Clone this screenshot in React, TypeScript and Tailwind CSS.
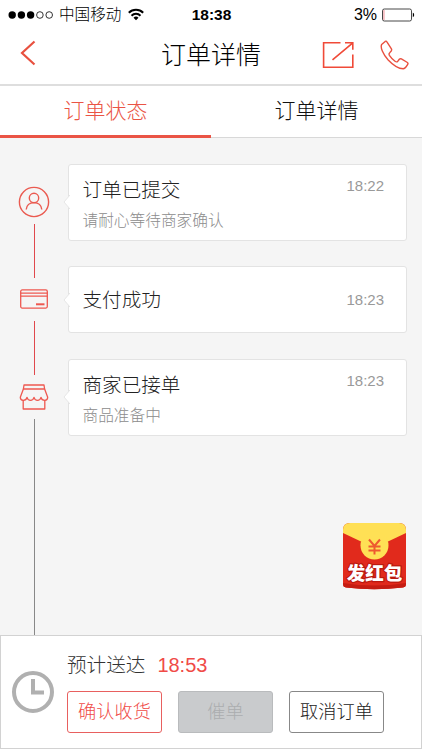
import React from 'react';

interface OrderStep {
    title: string;
    note?: string;
    time: string;
}

const steps: OrderStep[] = [
    { title: '订单已提交', note: '请耐心等待商家确认', time: '18:22' },
    { title: '支付成功', time: '18:23' },
    { title: '商家已接单', note: '商品准备中', time: '18:23' },
];

const StatusBar: React.FC = () => (
    <div className="grid h-7 grid-cols-[1fr_auto_1fr] items-center pr-[7px] pl-2 text-black">
        <div className="flex items-center">
            <svg width="46" height="10" viewBox="0 0 46 10">
                <circle cx="4.2" cy="5" r="3.7" />
                <circle cx="13.4" cy="5" r="3.7" />
                <circle cx="22.6" cy="5" r="3.7" />
                <circle cx="31.9" cy="5" r="3.3" fill="none" stroke="#000" strokeWidth="0.8" />
                <circle cx="41.2" cy="5" r="3.3" fill="none" stroke="#000" strokeWidth="0.8" />
            </svg>
            <span className="ml-[5px] pt-px text-[15.6px] leading-7 font-light">中国移动</span>
            <svg className="ml-[7px]" width="16" height="13" viewBox="0 0 16 13" fill="none" stroke="#000" strokeWidth="2">
                <path d="M0.8 4.8a10.2 10.2 0 0 1 14.4 0" />
                <path d="M3.5 7.7a6.4 6.4 0 0 1 9 0" />
                <path d="M8 12.2 5.5 9.7a3.5 3.5 0 0 1 5 0z" fill="#000" stroke="none" />
            </svg>
        </div>
        <span className="text-[15.5px] font-bold">18:38</span>
        <div className="flex items-center justify-end">
            <span className="text-[16px]">3%</span>
            <svg className="ml-[5px]" width="33" height="14" viewBox="0 0 33 14">
                <rect x="0.5" y="1" width="29" height="12" rx="1.8" fill="#fff" stroke="#333" strokeWidth="0.9" />
                <rect x="1.3" y="2" width="1.3" height="10" fill="#f3a6ac" />
                <path d="M30.8 4.8c1.8.4 1.8 4 0 4.4z" fill="#000" />
            </svg>
        </div>
    </div>
);

const Header: React.FC = () => (
    <div className="grid h-[58px] grid-cols-[1fr_auto_1fr] items-center border-b-2 border-[#dedede] pr-[13px] pl-[13px]">
        <svg className="mb-[7px] ml-[7px]" width="16" height="26" viewBox="0 0 16 26" fill="none" stroke="#e8503f" strokeWidth="2.2">
            <path d="M14.5 1.5 2 13l12.5 11.5" />
        </svg>
        <h1 className="-mt-[3px] text-[25px] leading-[50px] font-light text-black">订单详情</h1>
        <div className="flex items-center justify-end gap-[26px] pb-[2px]">
            <svg width="32" height="28" viewBox="0 0 32 28" fill="none" stroke="#f04a38" strokeWidth="1.6">
                <path d="M18.5 1.8H1.6v24.4h29.2V13.5" />
                <path d="M23 1.8h7.8v7M30.8 1.8 10.5 18.8" />
            </svg>
            <svg width="29" height="30" viewBox="0 0 29 30" fill="none" stroke="#e9503f" strokeWidth="1.4" strokeLinejoin="round">
                <path d="M5.2 1.4 1.6 4.6C.3 7.500 2.600 13.800 8.200 20c5.400 5.700 11 8.700 15 8.800 2.200 0 3.100-2.100 4.600-4.600.4-.8.200-1.300-.4-1.700l-6-3.600c-.8-.4-1.500-.3-2.100.4l-1.800 2.300c-.8.500-1.700.200-2.500-.4-2.300-1.700-4-3.500-5.600-5.900-.5-.9-.5-1.700.2-2.400l1.600-1.900c.5-.7.600-1.400.2-2.100L6.900 1.900c-.4-.8-1-1-1.700-.5z" />
            </svg>
        </div>
    </div>
);

const UserIcon: React.FC = () => (
    <svg className="shrink-0" width="32" height="32" viewBox="0 0 32 32" fill="none" stroke="#ea5a50" strokeWidth="1.4">
        <circle cx="16" cy="16" r="14.6" />
        <circle cx="16" cy="12" r="4.7" />
        <path d="M8.2 23.5c.5-4.3 3-6.9 7.8-6.9s7.3 2.6 7.8 6.9" />
    </svg>
);

const CardIcon: React.FC = () => (
    <svg className="shrink-0" width="28" height="20" viewBox="0 0 28 20" fill="none" stroke="#ee5850" strokeWidth="1.3">
        <rect x="0.7" y="0.9" width="26.6" height="18.2" rx="1.5" />
        <path d="M0.7 4.1h26.6M0.7 7.2h26.6" />
        <path d="M16 15.3h8.5" strokeWidth="2" />
    </svg>
);

const ShopIcon: React.FC = () => (
    <svg className="shrink-0" width="30" height="26" viewBox="0 0 30 26" fill="none" stroke="#ee5850" strokeWidth="1.3" strokeLinejoin="round">
        <path d="M5 1h20l.6 4H4.4z" />
        <path d="M4.4 5 1.3 13.3c0 1.8 1.2 3 2.9 3 1.900 0 3.400-1.200 3.800-3 .5 1.800 1.700 3 3.500 3s3-1.200 3.500-3c.5 1.800 1.700 3 3.500 3s3-1.200 3.500-3c.4 1.800 1.900 3 3.800 3 1.700 0 2.900-1.200 2.900-3L25.6 5" />
        <path d="M4.2 16.3V25h21.6v-8.7" />
    </svg>
);

const StepCard: React.FC<{ step: OrderStep }> = ({ step }) => (
    <div className={`relative flex rounded-[3px] border border-[#e3e3e3] bg-white pr-[22px] pl-[13.5px] ${step.note ? 'h-[77px] items-start pt-[8px]' : 'h-[67px] items-center'}`}>
        <svg className="absolute top-1/2 -left-[6px] -translate-y-1/2" width="7" height="16" viewBox="0 0 7 16">
            <path d="M7 1 1 8l6 7" fill="#fff" stroke="#e6e6e6" />
        </svg>
        <div className="flex-1">
            <div className="text-[19.6px] leading-[34px] font-light text-[#222]">{step.title}</div>
            {step.note && <div className="text-[15.7px] leading-[27px] font-light text-[#8c8c8c]">{step.note}</div>}
        </div>
        <div className="text-[15px] leading-[26px] text-[#999]">{step.time}</div>
    </div>
);

const RedPacket: React.FC = () => (
    <button className="absolute right-[15px] bottom-[45px]">
        <svg width="65" height="68" viewBox="0 0 65 68">
            <path d="M1 8q0-7 7-7h49q7 0 7 7v54q0 3-3 3.5Q32 69 4 65.5 1 65 1 62z" fill="#e12a1c" />
            <path d="M1 11V8q0-7 7-7h49q7 0 7 7v3L46 19.500H19z" fill="#ffe055" />
            <circle cx="32.5" cy="23.5" r="14" fill="#ffe055" />
            <path d="M1 61q31 5 63 0v1q0 3-3 3.5Q32 69 4 65.500 1 65 1 62z" fill="#c51d12" />
            <path d="m27 17.500 5.500 6.500L38 17.500M32.500 24v8.500M26.500 24.500h12M26.500 28.500h12" fill="none" stroke="#ee5a30" strokeWidth="2" />
            <text x="32.5" y="57.5" textAnchor="middle" fontSize="18.5" fontWeight="900" fill="#fff" stroke="#bb190e" strokeWidth="2.5" paintOrder="stroke" strokeLinejoin="round">发红包</text>
        </svg>
    </button>
);

const Timeline: React.FC = () => (
    <div className="relative flex h-[497px] bg-[#f5f5f5] pr-[15px]">
        <div className="flex w-[68px] flex-col items-center pt-12">
            <UserIcon />
            <div className="mt-[6px] h-[54px] w-px bg-[#e0484c]" />
            <div className="mt-[11px] flex"><CardIcon /></div>
            <div className="mt-3 h-[54px] w-px bg-[#e0484c]" />
            <div className="mt-[9px] flex"><ShopIcon /></div>
            <div className="mt-[9px] w-px flex-1 bg-[#888]" />
        </div>
        <div className="flex flex-1 flex-col gap-[25.5px] pt-[25.5px]">
            {steps.map((step) => (
                <StepCard key={step.title} step={step} />
            ))}
        </div>
        <RedPacket />
    </div>
);

const Footer: React.FC = () => (
    <div className="flex h-[114px] border border-[#d2d2d2] bg-white">
        <div className="flex w-[66px] items-center justify-center pr-[2px]">
            <svg width="44" height="44" viewBox="0 0 44 44" fill="none" stroke="#b0b0b0" strokeWidth="4">
                <circle cx="22" cy="22" r="19" />
                <path d="M22 9v13.5h11" />
            </svg>
        </div>
        <div className="pt-[13px]">
            <div className="flex items-center text-[19.6px] leading-[32px] font-light">
                <span className="text-[#333]">预计送达</span>
                <span className="ml-3 text-[20px] text-[#f04b47]">18:53</span>
            </div>
            <div className="mt-[10px] flex gap-4 text-[18.2px] font-light">
                <button className="h-[42px] w-[95px] rounded-[3px] border border-[#e8605f] pt-[2px] text-[#f04b47]">确认收货</button>
                <button className="h-[42px] w-[95px] rounded-[3px] border border-[#b9bbbd] bg-[#c9cbcd] pt-[2px] text-[#abadaf]">催单</button>
                <button className="h-[42px] w-[95px] rounded-[3px] border border-[#888] pt-[2px] text-[#222]">取消订单</button>
            </div>
        </div>
    </div>
);

const App: React.FC = () => {
    return (
        <div className="h-[750px] w-[422px] overflow-hidden bg-white font-['Liberation_Sans','Noto_Sans_CJK_SC',sans-serif]">
            <StatusBar />
            <Header />
            <div className="flex h-[52px] text-[21px] leading-[50px] font-light">
                <div className="flex-1 border-b-3 border-[#ea5445] text-center text-[#ea5445]">订单状态</div>
                <div className="flex-1 border-b border-[#d8d8d8] text-center text-[#111]">订单详情</div>
            </div>
            <Timeline />
            <Footer />
        </div>
    );
};

export default App;
